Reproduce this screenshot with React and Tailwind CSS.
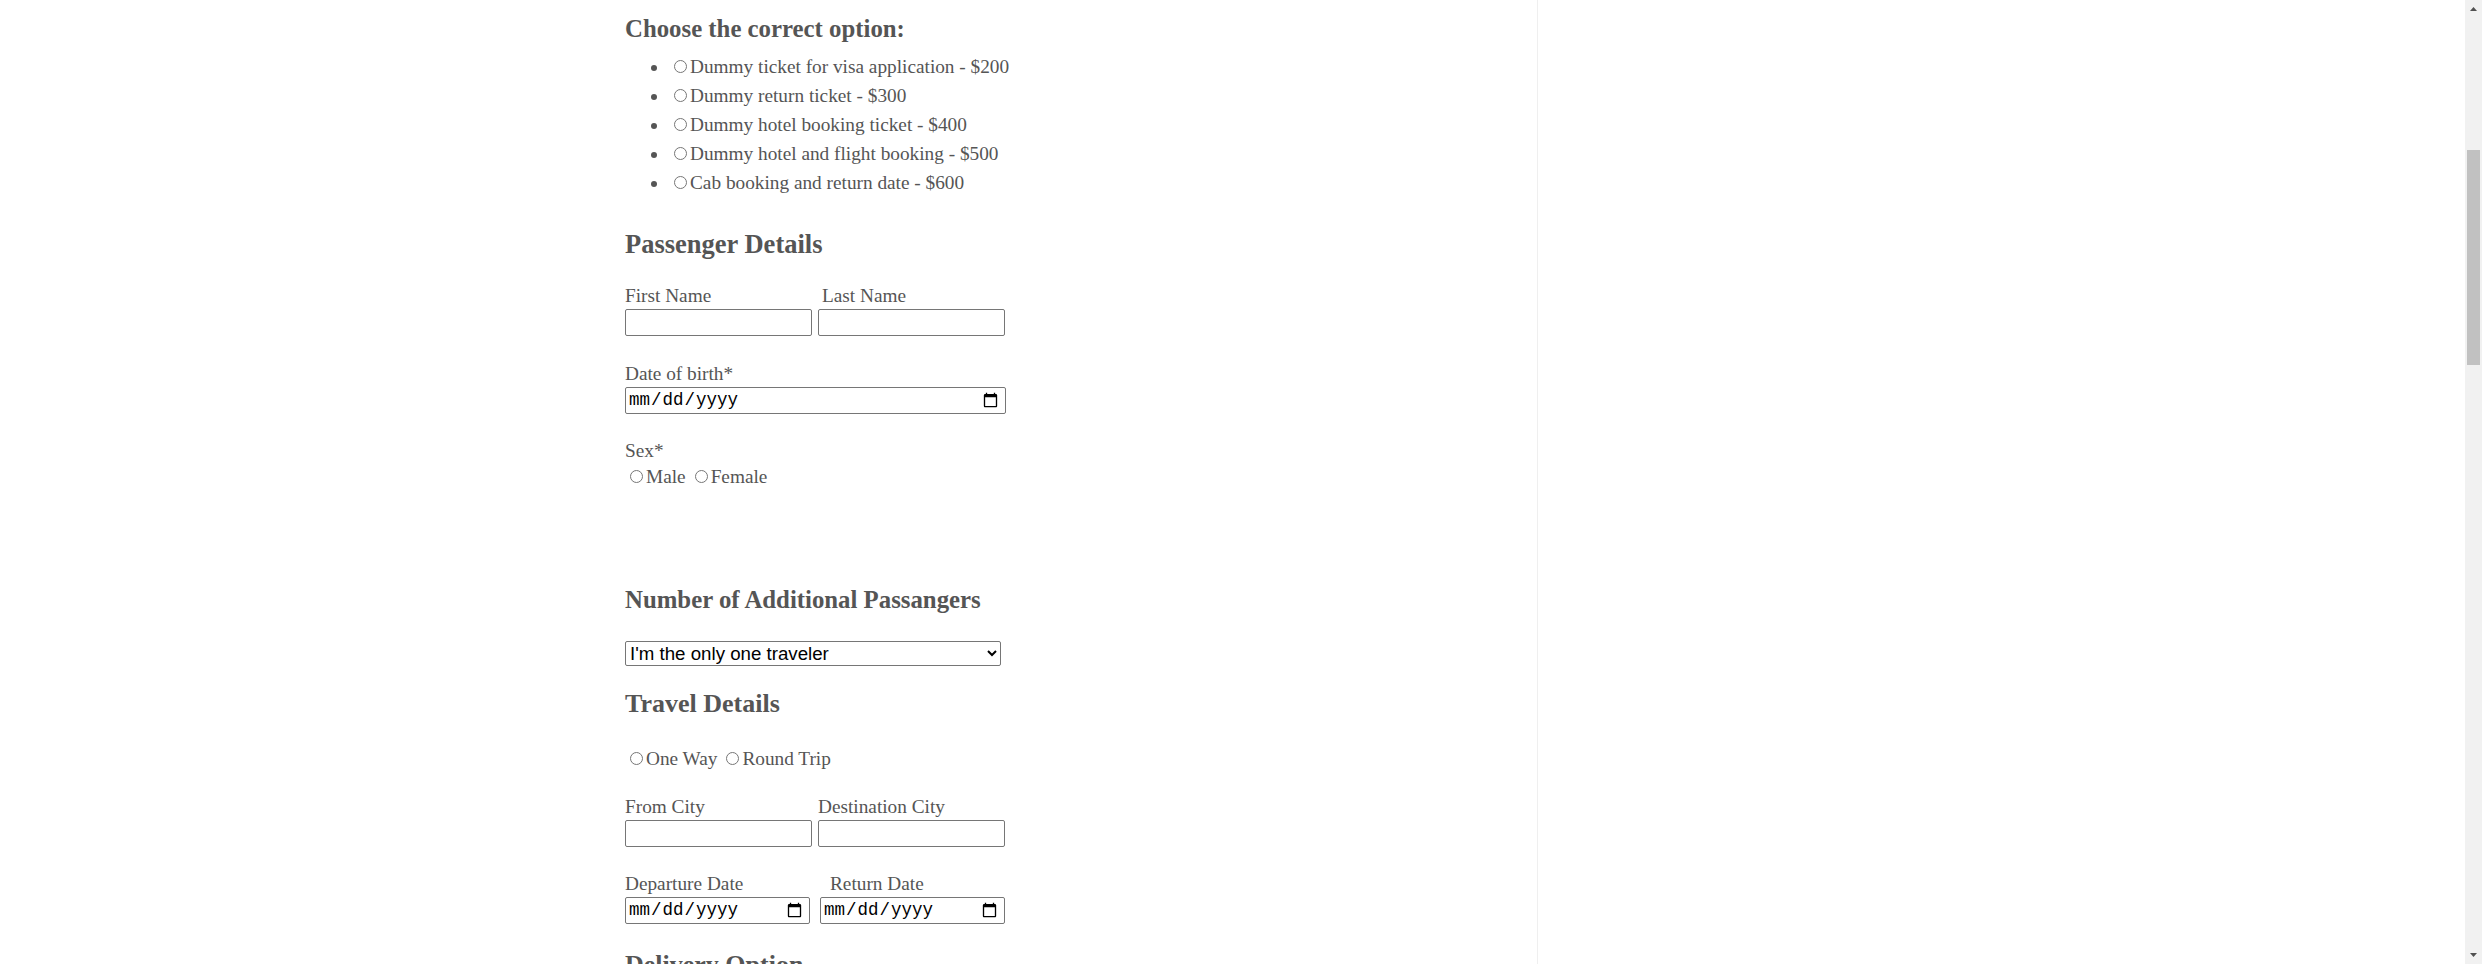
import React from "react";

const serif = "font-['Liberation_Serif',serif]";

function Radio({ name, label }) {
  return (
    <label className="inline-flex items-baseline">
      <input type="radio" name={name} className="ml-[5px] mr-[3px] h-[13px] w-[13px]" />
      <span>{label}</span>
    </label>
  );
}

function Heading({ children, className = "" }) {
  return (
    <h3 className={`font-bold leading-[32px] text-[#555555] ${className}`}>{children}</h3>
  );
}

const textInput =
  "h-[27px] border border-[#767676] rounded-[2px] bg-white px-[2px]";
const dateInput =
  "h-[27px] border border-[#767676] rounded-[2px] bg-white pl-[2px] pr-[4px] font-['Liberation_Mono',monospace] text-[17.5px] text-black";

export default function App() {
  const options = [
    "Dummy ticket for visa application - $200",
    "Dummy return ticket - $300",
    "Dummy hotel booking ticket - $400",
    "Dummy hotel and flight booking - $500",
    "Cab booking and return date - $600",
  ];
  return (
    <div className="flex h-[964px] w-full overflow-hidden bg-white">
      <div className="w-[1538px] shrink-0 border-r border-[#efefef] pl-[625px]">
        <div className={`${serif} flex flex-col text-[19.3px] text-[#555555]`}>
          <h3 className="mt-[14px] text-[24.8px] font-bold leading-[30px] text-[#555555]">
            Choose the correct option:
          </h3>
          <ul className="mt-[8px] list-disc pl-[44px] leading-[29px]">
            {options.map((o) => (
              <li key={o} className="marker:text-[#555555]">
                <label className="inline-flex items-baseline">
                  <input type="radio" name="opt" className="ml-[5px] mr-[3px] h-[13px] w-[13px]" />
                  <span>{o}</span>
                </label>
              </li>
            ))}
          </ul>

          <Heading className="mt-[31px] text-[26.5px]">Passenger Details</Heading>
          <div className="mt-[25px] flex leading-[22px]">
            <span className="w-[197px]">First Name</span>
            <span>Last Name</span>
          </div>
          <div className="mt-[2px] flex gap-[6px]">
            <input type="text" className={`${textInput} w-[187px]`} />
            <input type="text" className={`${textInput} w-[187px]`} />
          </div>

          <div className="mt-[27px] leading-[22px]">Date of birth*</div>
          <input type="date" className={`${dateInput} mt-[2px] w-[381px]`} />

          <div className="mt-[26px] leading-[22px]">Sex*</div>
          <div className="mt-[4px] flex leading-[22px]">
            <Radio name="sex" label="Male" />
            <span className="w-[4px]" />
            <Radio name="sex" label="Female" />
          </div>

          <Heading className="mt-[96px] text-[24.8px]">Number of Additional Passangers</Heading>
          <select className="mt-[25px] h-[25px] w-[376px] rounded-[2px] border border-[#767676] bg-white font-['Liberation_Sans',sans-serif] text-[18.7px] leading-[21px] text-black">
            <option>I'm the only one traveler</option>
            <option>1 additional traveler</option>
            <option>2 additional travelers</option>
          </select>

          <Heading className="mt-[22px] text-[26px]">Travel Details</Heading>
          <div className="mt-[28px] flex leading-[22px]">
            <Radio name="trip" label="One Way" />
            <span className="w-[4px]" />
            <Radio name="trip" label="Round Trip" />
          </div>

          <div className="mt-[26px] flex leading-[22px]">
            <span className="w-[193px]">From City</span>
            <span>Destination City</span>
          </div>
          <div className="mt-[2px] flex gap-[6px]">
            <input type="text" className={`${textInput} w-[187px]`} />
            <input type="text" className={`${textInput} w-[187px]`} />
          </div>

          <div className="mt-[26px] flex leading-[22px]">
            <span className="w-[205px]">Departure Date</span>
            <span>Return Date</span>
          </div>
          <div className="mt-[2px] flex gap-[10px]">
            <input type="date" className={`${dateInput} w-[185px]`} />
            <input type="date" className={`${dateInput} w-[185px]`} />
          </div>

          <Heading className="mt-[25px] text-[26px]">Delivery Option</Heading>
        </div>
      </div>
      <div className="flex-1" />
      <div className="flex w-[17px] shrink-0 flex-col items-center bg-[#f1f1f1]">
        <svg width="17" height="17" viewBox="0 0 17 17" className="shrink-0">
          <path d="M5 11 L8.5 7 L12 11 Z" fill="#505050" />
        </svg>
        <div className="mt-[133px] h-[215px] w-[13px] bg-[#c1c1c1]" />
        <div className="flex-1" />
        <svg width="17" height="17" viewBox="0 0 17 17" className="shrink-0">
          <path d="M5 6 L8.5 10 L12 6 Z" fill="#505050" />
        </svg>
      </div>
    </div>
  );
}
